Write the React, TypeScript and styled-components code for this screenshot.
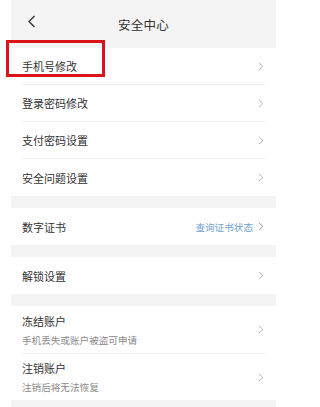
import React from "react";
import styled, { createGlobalStyle } from "styled-components";

const GlobalStyle = createGlobalStyle`
  html, body {
    margin: 0;
    padding: 0;
    background: #ffffff;
  }
  body {
    font-family: "Noto Sans CJK SC", "Noto Sans", sans-serif;
    color: #333333;
  }
`;

interface IRow {
  title: string;
  sub?: string;
  extra?: string;
}

const groups: IRow[][] = [
  [
    { title: "手机号修改" },
    { title: "登录密码修改" },
    { title: "支付密码设置" },
    { title: "安全问题设置" },
  ],
  [{ title: "数字证书", extra: "查询证书状态" }],
  [{ title: "解锁设置" }],
  [
    { title: "冻结账户", sub: "手机丢失或账户被盗可申请" },
    { title: "注销账户", sub: "注销后将无法恢复" },
  ],
];

const Chevron: React.FC<{ color?: string }> = ({ color = "#b3b3b3" }) => (
  <svg width="6" height="9" viewBox="0 0 6 9" fill="none">
    <path d="M1 0.8 L4.8 4.5 L1 8.2" stroke={color} strokeWidth="1" />
  </svg>
);

const App: React.FC = () => {
  return (
    <Page>
      <GlobalStyle />
      <Screen>
        <Header>
          <Back>
            <svg width="9" height="13" viewBox="0 0 9 13" fill="none">
              <path d="M7.5 1 L2 6.5 L7.5 12" stroke="#333" strokeWidth="1.4" />
            </svg>
          </Back>
          <Title>安全中心</Title>
        </Header>
        {groups.map((rows, gi) => (
          <Group key={gi}>
            {rows.map((row, ri) => (
              <Row key={row.title} $tall={!!row.sub} $last={ri === rows.length - 1}>
                <Texts>
                  <RowTitle>{row.title}</RowTitle>
                  {row.sub && <RowSub>{row.sub}</RowSub>}
                </Texts>
                <Right>
                  {row.extra && <Extra>{row.extra}</Extra>}
                  <Chevron color={row.extra ? "#9a9a9a" : "#b3b3b3"} />
                </Right>
              </Row>
            ))}
          </Group>
        ))}
        <Bottom />
      </Screen>
      <Highlight />
    </Page>
  );
};

export default App;

const Page = styled.div`
  position: relative;
  width: 282px;
  height: 407px;
  overflow: hidden;
`;

const Screen = styled.div`
  margin-left: 11px;
  width: 265px;
  background: #f4f4f4;
  display: flex;
  flex-direction: column;
  gap: 12px;
`;

const Header = styled.div`
  position: relative;
  height: 48px;
  display: flex;
  align-items: center;
  justify-content: center;
  margin-bottom: -12px;
`;

const Back = styled.div`
  position: absolute;
  left: 16px;
  top: 15px;
  display: flex;
`;

const Title = styled.div`
  font-size: 12.5px;
  color: #333;
  letter-spacing: 0.2px;
`;

const Group = styled.div`
  background: #ffffff;
  padding: 0 11px;
`;

const Row = styled.div<{ $tall: boolean; $last: boolean }>`
  box-sizing: border-box;
  height: ${(p) => (p.$tall ? (p.$last ? "46px" : "48px") : "37px")};
  display: flex;
  align-items: center;
  justify-content: space-between;
  border-bottom: ${(p) => (p.$last ? "none" : "1px solid #eeeeee")};
`;

const Texts = styled.div`
  display: flex;
  flex-direction: column;
  gap: 6px;
`;

const RowTitle = styled.div`
  font-size: 11px;
  line-height: 14px;
  color: #333;
`;

const RowSub = styled.div`
  font-size: 9.6px;
  line-height: 12px;
  color: #8a8a8a;
`;

const Right = styled.div`
  display: flex;
  align-items: center;
  gap: 5px;
  padding-right: 1px;
`;

const Extra = styled.div`
  font-size: 9.6px;
  color: #6f9fd3;
`;

const Bottom = styled.div`
  height: 7px;
  margin-top: -12px;
`;

const Highlight = styled.div`
  position: absolute;
  left: 6px;
  top: 40px;
  width: 99px;
  height: 37px;
  box-sizing: border-box;
  border: 3px solid #dc1419;
`;
